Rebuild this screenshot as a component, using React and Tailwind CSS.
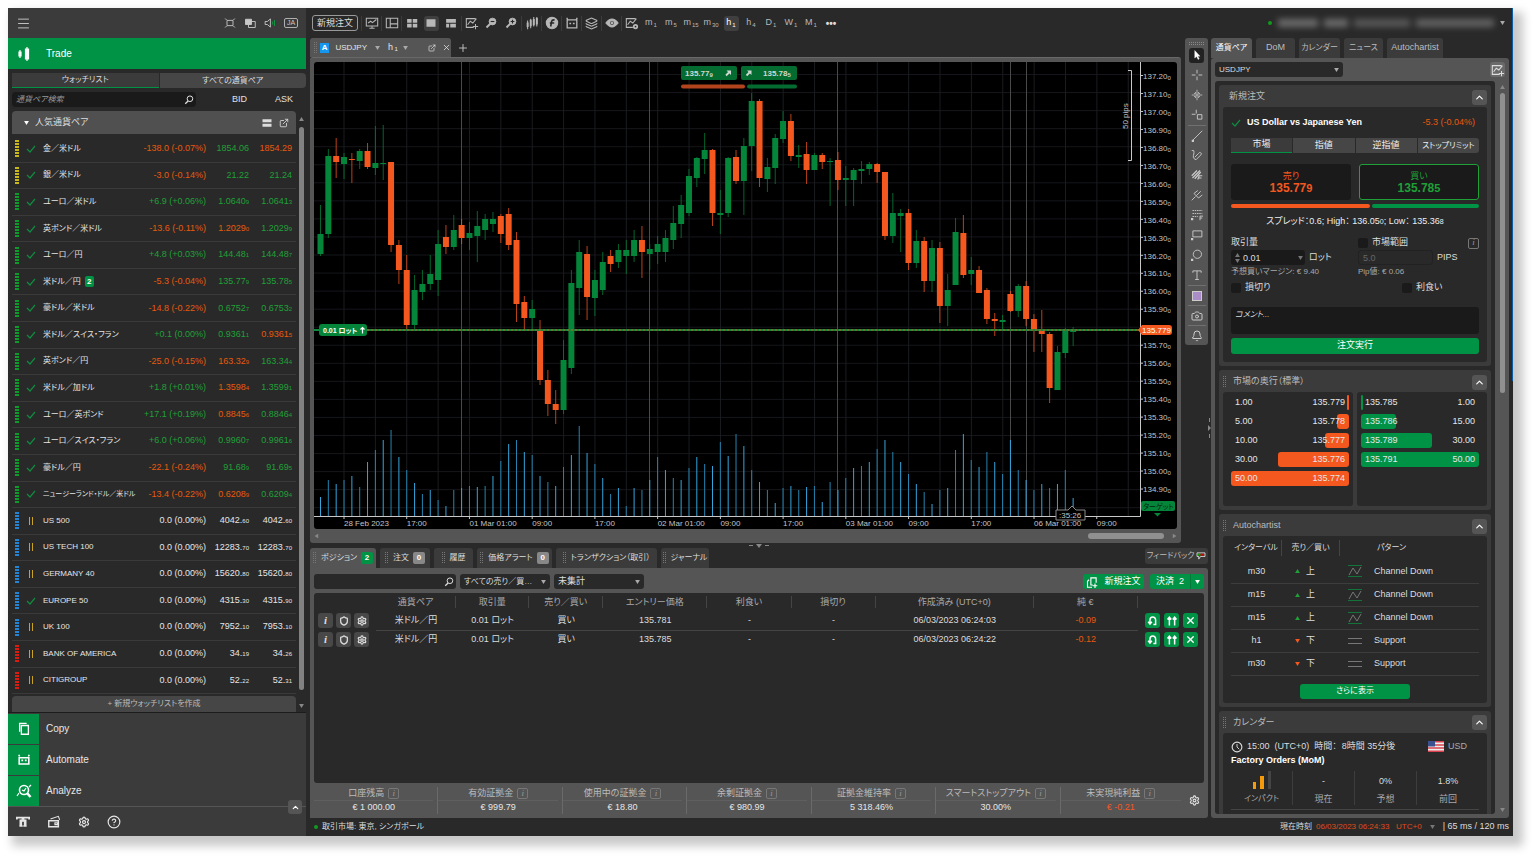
import React, { useState } from "react";
import { Menu, HelpCircle, Bell, Camera, ExternalLink, X, Plus, Settings, Shield, ChevronUp, Layers } from "lucide-react";

const watchlist = [
  ["金／米ドル", "-138.0 (-0.07%)", "d", "1854.06", "", "u", "1854.29", "", "d", "metal"],
  ["銀／米ドル", "-3.0 (-0.14%)", "d", "21.22", "", "u", "21.24", "", "u", "metal"],
  ["ユーロ／米ドル", "+6.9 (+0.06%)", "u", "1.0640", "9", "u", "1.0641", "3", "u", "forex"],
  ["英ポンド／米ドル", "-13.6 (-0.11%)", "d", "1.2029", "0", "d", "1.2029", "9", "u", "forex"],
  ["ユーロ／円", "+4.8 (+0.03%)", "u", "144.48", "1", "u", "144.48", "7", "u", "forex"],
  ["米ドル／円", "-5.3 (-0.04%)", "d", "135.77", "9", "u", "135.78", "5", "u", "forex"],
  ["豪ドル／米ドル", "-14.8 (-0.22%)", "d", "0.6752", "7", "u", "0.6753", "2", "u", "forex"],
  ["米ドル／スイス・フラン", "+0.1 (0.00%)", "u", "0.9361", "1", "u", "0.9361", "5", "d", "forex"],
  ["英ポンド／円", "-25.0 (-0.15%)", "d", "163.32", "9", "d", "163.34", "4", "u", "forex"],
  ["米ドル／加ドル", "+1.8 (+0.01%)", "u", "1.3598", "4", "d", "1.3599", "1", "u", "forex"],
  ["ユーロ／英ポンド", "+17.1 (+0.19%)", "u", "0.8845", "6", "d", "0.8846", "4", "u", "forex"],
  ["ユーロ／スイス・フラン", "+6.0 (+0.06%)", "u", "0.9960", "7", "u", "0.9961", "6", "u", "forex"],
  ["豪ドル／円", "-22.1 (-0.24%)", "d", "91.68", "9", "u", "91.69", "5", "u", "forex"],
  ["ニュージーランド・ドル／米ドル", "-13.4 (-0.22%)", "d", "0.6208", "9", "d", "0.6209", "4", "u", "forex"],
  ["US 500", "0.0 (0.00%)", "n", "4042.", "60", "n", "4042.", "60", "n", "index"],
  ["US TECH 100", "0.0 (0.00%)", "n", "12283.", "70", "n", "12283.", "70", "n", "index"],
  ["GERMANY 40", "0.0 (0.00%)", "n", "15620.", "80", "n", "15620.", "80", "n", "index"],
  ["EUROPE 50", "0.0 (0.00%)", "n", "4315.", "30", "n", "4315.", "90", "n", "index"],
  ["UK 100", "0.0 (0.00%)", "n", "7952.", "10", "n", "7953.", "10", "n", "index"],
  ["BANK OF AMERICA", "0.0 (0.00%)", "n", "34.", "19", "n", "34.", "26", "n", "stock"],
  ["CITIGROUP", "0.0 (0.00%)", "n", "52.", "22", "n", "52.", "31", "n", "stock"],
];

const tone = { u: "text-[#1fa038]", d: "text-[#e8590c]", n: "text-[#e6e6e6]" };
const dots = { metal: "#c9b81c", forex: "#0f9a2c", index: "#2384d4", stock: "#d81c10" };

// high, body top, body bottom, low, direction (1 up, 0 down)
const candles = [
  [205, 234, 254, 256, 1], [149, 156, 234, 238, 1], [138, 156, 162, 178, 0], [153, 157, 164, 179, 1],
  [153, 159, 160, 183, 0], [149, 151, 161, 169, 1], [143, 151, 167, 169, 0], [126, 163, 168, 175, 1],
  [125, 163, 164, 180, 1], [162, 162, 245, 252, 0], [240, 245, 270, 284, 0], [255, 270, 325, 330, 0],
  [275, 290, 325, 330, 1], [270, 284, 292, 300, 1], [255, 274, 284, 290, 1], [230, 244, 280, 296, 1],
  [225, 237, 247, 254, 0], [215, 230, 247, 250, 1], [219, 225, 238, 244, 0], [222, 233, 238, 250, 1],
  [211, 226, 236, 262, 1], [214, 219, 230, 240, 1], [212, 219, 224, 232, 1], [214, 216, 234, 243, 0],
  [208, 214, 245, 250, 0], [232, 240, 304, 322, 0], [296, 302, 318, 330, 0], [300, 309, 318, 330, 1],
  [320, 330, 380, 385, 0], [370, 380, 404, 416, 0], [390, 404, 410, 424, 0], [340, 360, 410, 414, 1],
  [270, 283, 368, 374, 1], [240, 252, 288, 315, 1], [246, 254, 297, 320, 0], [270, 280, 298, 316, 1],
  [252, 262, 290, 295, 1], [250, 256, 264, 272, 0], [244, 250, 262, 268, 1], [240, 250, 256, 274, 1],
  [230, 240, 256, 262, 1], [226, 240, 252, 278, 0], [244, 249, 254, 270, 1], [236, 244, 252, 264, 1],
  [230, 238, 252, 262, 1], [206, 223, 240, 249, 1], [195, 205, 224, 238, 1], [169, 176, 213, 216, 1],
  [157, 158, 178, 187, 1], [133, 150, 159, 174, 1], [149, 150, 213, 226, 0], [190, 213, 215, 234, 1],
  [157, 158, 213, 217, 1], [150, 157, 181, 184, 0], [138, 146, 181, 215, 1], [93, 101, 146, 171, 1],
  [99, 101, 178, 187, 0], [158, 167, 179, 192, 1], [134, 138, 168, 184, 1], [111, 121, 139, 143, 1],
  [114, 121, 156, 161, 0], [145, 155, 157, 168, 1], [142, 154, 170, 184, 0], [153, 155, 170, 170, 1],
  [153, 155, 162, 169, 0], [158, 161, 162, 206, 1], [152, 160, 180, 190, 0], [166, 178, 180, 206, 1],
  [168, 170, 180, 206, 1], [161, 169, 171, 184, 1], [162, 164, 169, 175, 1], [163, 164, 172, 183, 0],
  [172, 172, 236, 240, 0], [193, 213, 236, 243, 1], [209, 213, 216, 252, 1], [209, 213, 263, 270, 0],
  [230, 241, 263, 268, 1], [237, 241, 281, 292, 0], [240, 248, 281, 292, 1], [242, 248, 306, 323, 0],
  [274, 290, 306, 326, 1], [218, 232, 285, 285, 1], [215, 233, 275, 278, 0], [257, 270, 274, 285, 1],
  [266, 270, 293, 293, 0], [288, 290, 319, 324, 0], [313, 319, 321, 336, 0], [315, 320, 322, 329, 1],
  [291, 294, 311, 312, 0], [284, 286, 311, 317, 1], [281, 286, 319, 326, 0], [314, 319, 330, 352, 0],
  [310, 330, 334, 352, 0], [332, 334, 388, 403, 0], [346, 352, 390, 390, 1], [328, 330, 353, 358, 1],
  [327, 329, 332, 346, 1],
];

// tops of the tick volume bars
const volumes = [
  497, 480, 484, 480, 476, 487, 462, 450, 440, 430, 457, 470, 483, 494, 490, 500, 506, 490, 488, 486,
  487, 486, 476, 461, 444, 440, 452, 455, 476, 482, 486, 467, 455, 426, 453, 464, 478, 494, 488, 506,
  488, 490, 480, 457, 470, 478, 480, 468, 457, 464, 466, 442, 456, 434, 446, 470, 482, 490, 503, 488,
  486, 490, 487, 486, 502, 482, 490, 478, 468, 466, 462, 449, 440, 452, 462, 474, 484, 492, 504, 490,
  488, 450, 434, 460, 467, 452, 462, 474, 440, 470, 480, 490, 484, 488, 484, 470, 498,
];

const times = ["28 Feb 2023", "17:00", "01 Mar 01:00", "09:00", "17:00", "02 Mar 01:00", "09:00", "17:00", "03 Mar 01:00", "09:00", "17:00", "06 Mar 01:00", "09:00"];
const step = 7.84;
const candleX = (i) => 6.5 + step * i;

function PriceChart() {
  return (
    <svg viewBox="314 62 862 467" preserveAspectRatio="xMinYMin meet" className="block h-full w-full rounded-[3px] bg-black" fontSize="8" fill="#c4c4c4">
      {Array.from({ length: 25 }, (_, i) => (
        <path key={i} d={`M314 ${74.5 + i * 18.05}H1140`} stroke="#15161b" />
      ))}
      {Array.from({ length: 26 }, (_, i) => (
        <path key={i} d={`M${344 + i * 31.37} 62V516`} stroke="#1b1c20" />
      ))}
      {[461.5, 649.5, 837.5, 1010.5, 1026.5].map((x) => (
        <path key={x} d={`M${x} 62V516`} stroke="#4a4a4a" />
      ))}
      {volumes.map((y, i) => (
        <path key={i} d={`M${314 + candleX(i)} ${y}V516`} stroke={i % 2 ? "#2683b0" : "#35a5dc"} />
      ))}
      {candles.map(([hi, top, bottom, low, up], i) => {
        const x = 314 + candleX(i);
        return (
          <g key={i} fill={up ? "#058539" : "#f4581f"}>
            <rect x={x - 0.5} y={hi} width="1" height={low - hi} opacity="0.75" />
            <rect x={x - 3} y={top} width="6" height={Math.max(bottom - top, 1)} />
          </g>
        );
      })}
      <path d="M314 330H1140" stroke="#0c8b3c" strokeWidth="2" />
      <path d="M367 330H1140" stroke="#d9541f" strokeWidth="1" strokeDasharray="2 2" />

      {/* Axes */}
      <path d="M1140.5 62V516.5H314" stroke="#c8c8c8" fill="none" />
      {times.map((t, i) => (
        <g key={i}>
          <path d={`M${344 + i * 62.73} 516v3`} stroke="#c8c8c8" />
          <text x={344 + i * 62.73} y="526">{t}</text>
        </g>
      ))}
      {Array.from({ length: 24 }, (_, i) => {
        if (i === 14) return null;
        return (
          <g key={i}>
            <path d={`M1140 ${75.5 + i * 17.98}h3`} stroke="#c8c8c8" />
            <text x="1143" y={79 + i * 17.95}>
              {(137.2 - i * 0.1).toFixed(2)}
              <tspan fontSize="6" dy="1">0</tspan>
            </text>
          </g>
        );
      })}

      {/* Pips scale */}
      <path d="M1128 70.5h3.500v90H1128" stroke="#c8c8c8" fill="none" />
      <text transform="translate(1128 129) rotate(-90)">50 pips</text>

      {/* Quick trade buttons */}
      <rect x="681" y="66" width="56" height="14" rx="2" fill="#046c31" />
      <rect x="741" y="66" width="56" height="14" rx="2" fill="#046c31" />
      <g fontWeight="bold" fill="#cfd8d2">
        <text x="685" y="76">135.77<tspan fontSize="6" dy="1">9</tspan></text>
        <text x="763" y="76">135.78<tspan fontSize="6" dy="1">5</tspan></text>
      </g>
      <path d="M726 75.500l3-3M746.500 75.500l3-3" stroke="#cfd8d2" strokeWidth="1.800" />
      <path d="M726.500 70.500h4.500v4.500zM747 70.500h4.500v4.500z" fill="#cfd8d2" />
      <path d="M683 86.500H743" stroke="#b1441d" strokeWidth="4" strokeLinecap="round" />
      <path d="M749 86.500H795" stroke="#046c31" strokeWidth="4" strokeLinecap="round" />

      {/* Position label and last price */}
      <rect x="319" y="324" width="48" height="12" rx="3" fill="#058539" />
      <text x="323" y="333" fontSize="7" fontWeight="bold" fill="#fff">0.01 ロット</text>
      <path d="M362.500 333.500v-5M360.500 329.500l2-2 2 2" stroke="#fff" strokeWidth="1.200" fill="none" />
      <path d="M1138 330l4-5h27q3 0 3 3v4q0 3-3 3h-27z" fill="#f4581f" />
      <text x="1142" y="333" fill="#fff">135.779</text>

      <path d="M1056 510h12l4-4 4 4h9v10h-29z" fill="#000" stroke="#8a8a8a" />
      <text x="1059" y="518">:35:26</text>
      <rect x="1141" y="501" width="34" height="10" rx="2" fill="#058539" />
      <text x="1143" y="509" fontSize="7" fill="#04240f">ターゲット</text>
      <path d="M1154 513h7l-3.500 3.500z" fill="#058539" />
    </svg>
  );
}

function Svg({ children, className = "h-4 w-4", fill = "none" }) {
  return (
    <svg viewBox="0 0 16 16" className={className} fill={fill} stroke="currentColor" strokeWidth="1.2" aria-hidden="true">
      {children}
    </svg>
  );
}

const Check = () => (
  <svg viewBox="0 0 10 8" className="h-2 w-2.5 shrink-0" fill="none" stroke="#0f8a41" strokeWidth="1.2">
    <path d="M1 4l3 3 5-6" />
  </svg>
);

const Magnifier = ({ className = "h-3 w-3" }) => (
  <Svg className={className}>
    <circle cx="9.500" cy="6" r="4.500" strokeWidth="1.600" />
    <path d="M6.500 9.500L2 14" strokeWidth="2" />
  </Svg>
);

const Zoom = ({ plus }) => (
  <Svg className="h-3 w-3">
    <circle cx="10" cy="6" r="4.500" fill="currentColor" />
    <path d="M7 9l-5 5" strokeWidth="2.500" />
    <path d={plus ? "M7.500 6h5M10 3.500v5" : "M7.500 6h5"} stroke="#292929" strokeWidth="1.500" />
  </Svg>
);

const Caret = ({ className = "text-[#aaa]" }) => (
  <svg viewBox="0 0 6 5" className={`h-1 w-[5px] shrink-0 ${className}`} fill="currentColor"><path d="M0 0h6L3 5z" /></svg>
);

const Grip = () => (
  <svg viewBox="0 0 4 12" className="h-3 w-1 shrink-0" stroke="#777"><path d="M.5 0v12M2.500 0v12" strokeDasharray="1 1" /></svg>
);

const ChartAdd = () => (
  <Svg className="h-3.5 w-3.5">
    <path d="M10 13H1.500V3H12M3 10l3-4 3 2 4-5M12 9v6M9 12h6" />
  </Svg>
);

function Sidebar() {
  const nav = [
    ["Copy", <Svg key="c" className="h-3.5 w-3.5"><path d="M5 4h8v10H5zM3 11V1.500h8" strokeWidth="1.500" /></Svg>],
    ["Automate", <Svg key="a" className="h-3.5 w-3.5"><path d="M2.500 5.500h11v7h-11zM3 4L2 2M13 4l1-2" strokeWidth="1.800" /><path d="M5 8.500h2M9 8.500h2" strokeWidth="2" /></Svg>],
    ["Analyze", <Svg key="z" className="h-4 w-4"><circle cx="8" cy="7" r="4.500" strokeWidth="1.600" /><path d="M11 10l3.500 4" strokeWidth="2.500" /><path d="M1 13l2-3M6 7l2 1 2-3M13 4l2-2" /></Svg>],
  ];
  return (
    <aside className="flex w-[298px] shrink-0 flex-col bg-[#292929]">
      <div className="flex h-[30px] shrink-0 items-center justify-between bg-[#3b3b3b] px-2 text-[#c8c8c8]">
        <button aria-label="Menu"><Menu size={15} strokeWidth={1.5} /></button>
        <div className="flex items-center gap-2">
          <Svg className="h-3 w-3"><path d="M4 4.500h8v7H4zM1.500 2l2 2M14.500 2l-2 2M1.500 14l2-2M14.500 14l-2-2" /></Svg>
          <Svg className="h-3 w-3"><path d="M6 6h9v8H6z" /><path d="M2 3h8v7H2z" fill="currentColor" /></Svg>
          <Svg className="h-3 w-3"><path d="M1.500 6h3l4-3.500v11L4.500 10h-3z" /><path d="M11.500 6v4M14 4v8" stroke="#119a3e" /></Svg>
          <span className="flex h-2.5 w-[14px] items-center justify-center rounded-[2px] border border-[#b0b0b0] text-[7px]">JA</span>
        </div>
      </div>
      <button className="flex h-[31px] shrink-0 items-center gap-3.5 bg-[#009345] pl-2 text-[10px] text-white">
        <Svg className="h-4 w-4" fill="currentColor"><path d="M4 4v8M11 1v14" /><path d="M3 6h2v4H3zM9.500 3h3v10h-3z" /></Svg>
        <span>Trade</span>
      </button>

      <div className="mt-1 grid h-[15px] shrink-0 grid-cols-2 gap-px pl-1 text-[8px] text-[#ddd]">
        <button className="border-b border-[#009345] bg-[#3b3b3b] leading-3">ウォッチリスト</button>
        <button className="rounded-r bg-[#464646] leading-3">すべての通貨ペア</button>
      </div>

      <div className="mt-1 flex h-[15px] shrink-0 items-center pl-1 text-[9px] text-[#e0e0e0]">
        <label className="flex h-full w-[184px] items-center rounded bg-[#1a1a1a] pr-0.5">
          <input aria-label="通貨ペア検索" placeholder="通貨ペア検索" className="min-w-0 flex-1 bg-transparent px-1 text-[8px] italic outline-none placeholder:text-[#9a9a9a]" />
          <Magnifier className="h-2.5 w-2.5" />
        </label>
        <span className="w-[51px] text-right">BID</span>
        <span className="w-[46px] text-right">ASK</span>
      </div>

      <div className="mt-1 flex min-h-0 flex-1">
        <div className="flex min-w-0 flex-1 flex-col pl-1">
          <div className="flex h-[23px] shrink-0 items-center rounded-t bg-[#505050] px-3 pr-[7px] text-[9px] text-[#ddd]">
            <Caret className="text-white" />
            <span className="flex-1 pl-1.5">人気通貨ペア</span>
            <Svg className="mr-1.5 h-3 w-3" fill="currentColor"><path d="M2 3h12v4H2zM2 9h12v4H2z" stroke="none" /></Svg>
            <ExternalLink size={10} />
          </div>
          <ul className="mt-0.5 flex min-h-0 flex-1 flex-col">
            {watchlist.map(([name, change, ct, bid, bidS, bt, ask, askS, at, kind], i) => (
              <li key={name} className="flex min-h-0 flex-1 items-center border-b border-[#3a3a3a] pl-[3px] pr-1 text-[9px]">
                <svg viewBox="0 0 4 17" className="h-[17px] w-1 shrink-0" fill="none" stroke={dots[kind]} shapeRendering="crispEdges">
                  <path d="M2 0v17" strokeWidth="4" strokeDasharray="2 1" />
                </svg>
                <span className="flex w-6 justify-center">
                  {kind === "metal" || kind === "forex" || name === "EUROPE 50" ? (
                    <Check />
                  ) : (
                    <svg viewBox="0 0 6 8" className="h-2 w-1.5" stroke="#c9a227"><path d="M1.500 0v8M4.500 0v8" /></svg>
                  )}
                </span>
                <span className={`flex flex-1 items-center whitespace-nowrap text-[#e6e6e6] ${i === 13 ? "text-[7px]" : "text-[8px]"}`}>
                  {name}
                  {i === 5 && <b className="ml-1 flex h-[11px] w-[9px] items-center justify-center rounded-[2px] bg-[#009345] text-[8px] text-white">2</b>}
                </span>
                <span className={`whitespace-nowrap ${tone[ct]}`}>{change}</span>
                <span className={`w-[43px] text-right ${tone[bt]}`}>{bid}<small className="text-[6px]">{bidS}</small></span>
                <span className={`w-[43px] text-right ${tone[at]}`}>{ask}<small className="text-[6px]">{askS}</small></span>
              </li>
            ))}
          </ul>
          <button className="mt-0.5 h-4 w-full shrink-0 rounded-t bg-[#464646] text-[8px] leading-4 text-[#bbb]">+ 新規ウォッチリストを作成</button>
        </div>
        <div className="flex w-2.5 flex-col items-center pb-1 pt-1.5">
          <Caret className="rotate-180 text-[#888]" />
          <div className="mb-3.5 mt-1.5 w-[5px] flex-1 rounded bg-[#828282]" />
          <Caret className="text-[#888]" />
        </div>
      </div>

      <nav className="relative shrink-0 border-t border-[#1c1c1c] bg-[#3b3b3b]">
        {nav.map(([label, icon]) => (
          <a key={label} href="#" className="flex h-[31px] items-center text-[10px] text-[#e6e6e6]">
            <span className="flex h-[30px] w-[31px] items-center justify-center bg-[#009345] text-white">{icon}</span>
            <span className="pl-[7px]">{label}</span>
          </a>
        ))}
        <button aria-label="Collapse" className="absolute -bottom-2 right-1 flex h-3.5 w-3.5 items-center justify-center rounded-[3px] bg-[#555] text-white"><ChevronUp size={9} strokeWidth={3} /></button>
      </nav>
      <div className="flex h-[30px] shrink-0 items-center gap-[17px] border-t border-[#555] bg-[#3b3b3b] pl-2 text-[#e6e6e6]">
        <Svg className="h-3.5 w-3.5" fill="currentColor"><path d="M1 5V3h14v2" fill="none" strokeWidth="2" /><path d="M4 5h3v8H4zM9 5h3v8H9z" stroke="none" /><path d="M4 12.500h8M7 4h2v3H7z" /></Svg>
        <Svg className="h-3.5 w-3.5"><path d="M2 6.500h11v7H2z" strokeWidth="1.600" /><path d="M4 4.500l9-3 1.500 4M9 9h3v2H9z" /></Svg>
        <Settings size={12} strokeWidth={2.5} />
        <HelpCircle size={14} />
      </div>
    </aside>
  );
}

const toolIcons = [
  <Svg key="mo" className="h-3.5 w-3.5"><path d="M1.500 2.500h13v9h-13zM5 14h6M3.500 8l3-2 2 1.500L13 4M8 12v2" /></Svg>,
  <Svg key="l" className="h-3.5 w-3.5"><path d="M1.500 2.500h13v11h-13zM6 2.500v11M6 9h8" /></Svg>,
  <Svg key="g" fill="currentColor" className="h-3 w-3"><path d="M1.500 2.500h6v5h-6zM9 2.500h6v5H9zM1.500 9h6v5h-6zM9 9h6v5H9z" stroke="none" /></Svg>,
  <Svg key="s" fill="currentColor" className="h-3 w-3"><path d="M2 3h12v10H2z" stroke="none" /></Svg>,
  <Svg key="m" fill="currentColor" className="h-3 w-3"><path d="M1.500 2.500h13v5h-13zM1.500 9h4v5h-4zM7 9h7.500v5H7z" stroke="none" /></Svg>,
  <ChartAdd key="ca" />,
  <Zoom key="zo" />,
  <Zoom key="zi" plus />,
  <Svg key="cd" className="h-3.5 w-3.5"><path d="M3 5v10M6.500 3v11M10 1v11M13.500 1v11" /><path d="M2.500 8h1v4h-1zM6 5h1v6H6zM9.500 4h1v6h-1zM13 3h1v6h-1z" fill="currentColor" /></Svg>,
  <Svg key="f" className="h-3.5 w-3.5"><circle cx="8" cy="8" r="6.500" fill="currentColor" /><path d="M11 4.500q-3-.5-3.500 2L6.500 12M5.500 8h5" stroke="#292929" strokeWidth="1.800" /></Svg>,
  <Svg key="r" className="h-3.5 w-3.5"><path d="M2.500 4.500h11v9h-11zM3 4L2 2M13 4l1-2" strokeWidth="1.500" /><path d="M5 8.500h2M9 8.500h2" strokeWidth="1.800" /></Svg>,
  <Layers key="ly" size={13} />,
  <Svg key="e" className="h-3.5 w-3.5" fill="currentColor"><path d="M1 8q7-9 14 0-7 9-14 0z" /><circle cx="8" cy="8" r="2.800" fill="#292929" /><circle cx="8" cy="8" r="1" /></Svg>,
  <Svg key="cs" className="h-3.5 w-3.5"><path d="M9 13H1.500V3H12M3 10l3-4 3 2 4-5" /><circle cx="12" cy="12" r="2" strokeWidth="2" /></Svg>,
];

const frames = [["m", "1"], ["m", "5"], ["m", "15"], ["m", "30"], ["h", "1"], ["h", "4"], ["D", "1"], ["W", "1"], ["M", "1"]];

function Toolbar() {
  const [frame, setFrame] = useState(4);
  return (
    <header className="flex h-[30px] shrink-0 items-center pl-1.5 pr-2 text-[#b8b8b8]">
      <button className="mr-[3px] h-4 w-[46px] rounded-[3px] border border-[#999] text-[9px] leading-3 text-[#ddd]">新規注文</button>
      {toolIcons.map((icon, i) => (
        <div key={i} className={i > 7 || i < 3 || i === 5 ? "flex w-5 justify-center border-l border-[#3c3c3c]" : "flex w-5 justify-center"}>
          <button aria-label={`tool ${i + 1}`} className={i === 3 ? "flex h-[15px] w-[15px] items-center justify-center rounded-[3px] bg-[#3f3f3f]" : "flex h-[15px] items-center justify-center"}>{icon}</button>
        </div>
      ))}
      {frames.map(([unit, n], i) => (
        <div key={i} className="flex w-5 justify-center">
          <button
            onClick={() => setFrame(i)}
            className={`flex h-[15px] min-w-[15px] items-start justify-center rounded-[3px] text-[9px] leading-3 ${frame === i ? "bg-[#3f3f3f] text-white" : ""}`}
          >
            {unit}<span className="pl-px pt-[5px] text-[6px] leading-2">{n}</span>
          </button>
        </div>
      ))}
      <button aria-label="More" className="w-5 text-[10px] font-bold text-[#ddd]">•••</button>
      <div className="ml-auto flex items-center gap-1.5">
        <span className="h-1 w-1 rounded-full bg-[#119a1e]" />
        <div className="flex w-[216px] items-center gap-1.5 opacity-60 blur-[3px]" aria-hidden="true">
          <span className="h-2 w-10 bg-[#999]" />
          <span className="h-2 w-6 bg-[#999]" />
          <span className="h-2 w-14 bg-[#777]" />
          <span className="h-2 flex-1 bg-[#888]" />
        </div>
        <Caret />
      </div>
    </header>
  );
}

const palette = [
  <Svg key="0" className="h-3 w-3" fill="currentColor"><path d="M5 2v10l2.500-2 2 4 1.500-1-2-3.500h3z" strokeWidth="0.500" /></Svg>,
  <Svg key="1"><path d="M8 1v5M8 10v5M1 8h5M10 8h5" /></Svg>,
  <Svg key="2"><path d="M8 1v14M1 8h14M6 4v2H4M10 4v2h2M6 12v-2H4M10 12v-2h2" strokeWidth="1" /></Svg>,
  <Svg key="3"><path d="M7 1v5M1 7h5M8.500 7.500h6v6h-6z" /></Svg>,
  <Svg key="4"><path d="M2 14L15 1" /><path d="M1 13h3v3H1z" fill="currentColor" stroke="none" /></Svg>,
  <Svg key="5"><path d="M1 2q4-1 3 3t-1 6q2 4 4 3l6-6q2-2 0-3t-3 1l-5 5" /></Svg>,
  <Svg key="6"><path d="M1 9l7-7M2 12l10-10M5 13l8-9M9 14l2-5h4M10 12h4" strokeWidth="1.600" /></Svg>,
  <Svg key="7"><path d="M1 15l5-5M4 6l6 6M4 6l5-4M7 9l6-6M10 12l5-4" /></Svg>,
  <Svg key="8"><path d="M2 2h13M2 6h13M2 10h7" strokeDasharray="2 1" /><path d="M12 15V9.500h4M12 12h3" /><path d="M0 12h3v3H0z" fill="currentColor" stroke="none" /></Svg>,
  <Svg key="9"><path d="M2.500 2.500h12v8h-12z" /><path d="M0 12h3v3H0z" fill="currentColor" stroke="none" /></Svg>,
  <Svg key="10"><circle cx="8.500" cy="7" r="5.500" /><path d="M0 13h3v3H0z" fill="currentColor" stroke="none" /></Svg>,
  <Svg key="11"><path d="M2.500 5V2.500h11V5M8 2.500V14M5.500 14h5" /></Svg>,
  <span key="12" className="h-2.5 w-2.5 border border-[#ccc] bg-[#a98cc8]" />,
  <Camera key="13" />,
  <Bell key="14" />,
];

function ChartArea() {
  return (
    <section className="flex min-h-0 flex-1">
      <div className="flex min-w-0 flex-1 flex-col">
        <div className="flex h-[19px] shrink-0 items-end gap-1.5">
          <div className="flex h-full w-[141px] items-center rounded-t-[3px] bg-[#555] pl-1 text-[9px] text-[#e6e6e6]">
            <Grip />
            <b className="ml-0.5 flex h-2.5 w-2.5 items-center justify-center bg-[#1597f0] text-[8px] text-white">A</b>
            <span className="ml-1.5 w-[42px] text-[8px]">USDJPY</span>
            <Caret />
            <span className="ml-2 w-4">h<sub className="text-[6px]"> 1</sub></span>
            <Caret />
            <button aria-label="Detach" className="ml-5"><ExternalLink size={8} /></button>
            <button aria-label="Close" className="ml-1.5"><X size={9} /></button>
          </div>
          <button aria-label="New tab" className="h-full text-[#bbb]"><Plus size={12} /></button>
        </div>
        <div className="flex min-h-0 flex-1 flex-col rounded-[3px] border-t border-[#686868] bg-[#555] px-1 pt-1">
          <div className="min-h-0 flex-1"><PriceChart /></div>
          <div className="flex h-3.5 shrink-0 items-center justify-end gap-2 text-[#888]">
            <Caret className="mr-auto rotate-90 text-[#888]" />
            <div className="h-1.5 w-[76px] rounded-full bg-[#909090]" />
            <Caret className="-rotate-90 text-[#888]" />
          </div>
        </div>
      </div>
      <div className="ml-1 flex w-[23px] shrink-0 flex-col items-center self-start rounded-[3px] bg-[#555] pt-1 text-[#ccc]">
        <svg viewBox="0 0 16 3" className="h-[3px] w-4" stroke="#888"><path d="M0 .5h16M0 2.500h16" strokeDasharray="1 1" /></svg>
        {palette.map((icon, i) => (
          <div key={i} className={i === 4 || i > 11 ? "flex h-5 w-[18px] items-center justify-center border-t border-[#707070]" : "flex h-5 w-[18px] items-center justify-center"}>
            <button aria-label={`drawing ${i + 1}`} className={i === 0 ? "flex h-[15px] w-[15px] items-center justify-center rounded-[3px] bg-[#222] text-white" : "flex h-[15px] w-[15px] items-center justify-center [&>svg]:h-3 [&>svg]:w-3"}>{icon}</button>
          </div>
        ))}
      </div>
    </section>
  );
}

const tabs = [["ポジション", 2, "w-[66px]"], ["注文", 0, "w-[50px]"], ["履歴", null, "w-[39px]"], ["価格アラート", 0, "w-[75px]"], ["トランザクション（取引）", null, "w-[101px]"], ["ジャーナル", null, "w-12"]];
const heads = ["", "通貨ペア", "取引量", "売り／買い", "エントリー価格", "利食い", "損切り", "作成済み (UTC+0)", "純 €", ""];
const colWidths = ["w-[62px]", "w-[80px]", "w-[73px]", "w-[74px]", "w-[104px]", "w-[84px]", "w-[84px]", "w-[158px]", "w-[104px]", "w-[66px]"];
const positions = [["135.781", "06/03/2023 06:24:03", "-0.09"], ["135.785", "06/03/2023 06:24:22", "-0.12"]];
const metrics = [["口座残高", "€ 1 000.00"], ["有効証拠金", "€ 999.79"], ["使用中の証拠金", "€ 18.80"], ["余剰証拠金", "€ 980.99"], ["証拠金維持率", "5 318.46%"], ["スマートストップアウト", "30.00%"], ["未実現純利益", "€ -0.21"]];

const InfoBox = () => <i className="flex h-[11px] w-[11px] shrink-0 items-center justify-center rounded-[2px] border border-[#777] font-['Liberation_Serif',serif] text-[9px] text-[#999]">i</i>;

function Positions() {
  const grey = "flex h-[15px] w-[15px] items-center justify-center rounded-[3px] bg-[#484848] text-[#ddd]";
  const green = "flex h-[15px] w-[15px] items-center justify-center rounded-[3px] bg-[#009345] text-white";
  return (
    <section className="flex h-[270px] shrink-0 flex-col text-[9px]">
      <div className="flex h-5 shrink-0 items-start gap-1">
        {tabs.map(([label, n, width], i) => (
          <button key={label} className={`flex h-full items-center justify-center gap-1 whitespace-nowrap rounded-t-[3px] text-[8px] text-[#ddd] ${width} ${i === 0 ? "bg-[#555]" : "bg-[#3b3b3b]"}`}>
            <Grip />
            {label}
            {n !== null && <b className={`flex h-3 w-3 shrink-0 items-center justify-center rounded-[2px] text-white ${i === 0 ? "bg-[#009345]" : "bg-[#888]"}`}>{n}</b>}
          </button>
        ))}
        <button className="ml-auto flex h-4 w-[63px] items-center justify-center gap-0.5 whitespace-nowrap rounded-[3px] bg-[#3b3b3b] text-[8px] text-[#bbb]">
          フィードバック
          <svg viewBox="0 0 11 9" className="h-2 w-2.5 shrink-0"><path d="M1 1h9v4H5L3 8V5H1z" fill="#3b3b3b" stroke="#ddd" /><path d="M2 2h3v2H2z" fill="#0a0" /><path d="M5 2h4v2H5z" fill="#d00" /></svg>
        </button>
      </div>
      <div className="flex min-h-0 flex-1 flex-col rounded-r-[3px] bg-[#555] px-1 pt-1.5">
        <div className="flex h-[15px] shrink-0 items-center gap-1 text-[#ddd]">
          <label className="flex h-full w-[142px] items-center rounded-[3px] bg-[#292929] pr-0.5">
            <input aria-label="検索" className="min-w-0 flex-1 bg-transparent outline-none" />
            <Magnifier className="h-2.5 w-2.5" />
          </label>
          <label className="relative flex h-full items-center">
            <select aria-label="方向" className="h-full w-[90px] appearance-none rounded-[3px] bg-[#292929] pl-1 text-[8px]"><option>すべての売り／買…</option></select>
            <span className="absolute right-1"><Caret /></span>
          </label>
          <label className="relative flex h-full items-center">
            <select aria-label="集計" className="h-full w-[90px] appearance-none rounded-[3px] bg-[#292929] pl-1 text-[9px]"><option>未集計</option></select>
            <span className="absolute right-1"><Caret /></span>
          </label>
          <button className="ml-auto mr-0.5 flex h-[15px] w-[61px] items-center justify-center gap-1.5 rounded-[3px] bg-[#009345] text-white">
            <Svg className="h-3 w-3"><path d="M9 12H6.500V2.500h7V9M4 5L2 7v8h6M12 10v6M9 13h6" strokeWidth="1.500" /></Svg>
            新規注文
          </button>
          <button className="flex h-[15px] w-[54px] items-center rounded-[3px] bg-[#009345] pl-1.5 text-white">
            <span className="flex-1 text-left">決済 &nbsp;2</span>
            <span className="flex h-full w-3.5 items-center justify-center border-l border-[#047a3a]"><Caret className="text-white" /></span>
          </button>
        </div>
        <div className="mt-1 min-h-0 flex-1 rounded-[3px] bg-[#292929]">
          <table className="w-full table-fixed border-collapse text-center text-[#ddd]">
            <colgroup>{colWidths.map((w, i) => <col key={i} className={w} />)}</colgroup>
            <thead>
              <tr className="h-[18px] text-[#aaa]">
                {heads.map((h, i) => (
                  <th key={i} className="whitespace-nowrap p-0 font-normal"><span className={i > 0 && i < 9 ? "block border-r border-[#444] leading-3" : "block"}>{h}</span></th>
                ))}
              </tr>
            </thead>
            <tbody>
              {positions.map(([price, time, net], row) => {
                const cell = row === 0 ? "whitespace-nowrap border-b border-[#444] p-0" : "whitespace-nowrap p-0";
                return (
                  <tr key={time} className="h-[19px]">
                    <td className="p-0">
                      <div className="flex gap-[3px] pl-1">
                        <button aria-label="情報" className={grey}><i className="font-['Liberation_Serif',serif] text-[11px] font-bold">i</i></button>
                        <button aria-label="保護" className={grey}><Shield size={10} strokeWidth={3} /></button>
                        <button aria-label="設定" className={grey}><Settings size={10} strokeWidth={3} /></button>
                      </div>
                    </td>
                    <td className={cell}>米ドル／円</td>
                    <td className={cell}>0.01 ロット</td>
                    <td className={cell}>買い</td>
                    <td className={cell}>{price}</td>
                    <td className={cell}>-</td>
                    <td className={cell}>-</td>
                    <td className={cell}>{time}</td>
                    <td className={`${cell} text-[#e8590c]`}>{net}</td>
                    <td className="p-0">
                      <div className="flex justify-end gap-1 pr-1.5">
                        <button aria-label="反転" className={green}><Svg className="h-3 w-3"><path d="M4 11V6.500a3.500 3.500 0 0 1 7.500 0V12.500H8.500M1.500 9L4 12l2.500-3" strokeWidth="2" /></Svg></button>
                        <button aria-label="倍増" className={green}><Svg className="h-3 w-3"><path d="M4.500 14V3M2 6l2.500-3L7 6M11.500 14V3M9 6l2.500-3L14 6" strokeWidth="2" /></Svg></button>
                        <button aria-label="決済" className={green}><X size={11} strokeWidth={3} /></button>
                      </div>
                    </td>
                  </tr>
                );
              })}
            </tbody>
          </table>
        </div>
        <div className="flex h-[35px] shrink-0 items-center">
          <dl className="grid flex-1 grid-cols-7 text-center">
            {metrics.map(([label, value], i) => (
              <div key={label} className={i < 6 ? "border-r border-[#6a6a6a] pr-1" : "pr-1"}>
                <dt className="flex h-3.5 items-center justify-center gap-1 whitespace-nowrap border-b border-[#5f5f5f] text-[#bbb]">{label}<InfoBox /></dt>
                <dd className={i === 6 ? "text-[#f4581f]" : "text-[#e6e6e6]"}>{value}</dd>
              </div>
            ))}
          </dl>
          <button aria-label="設定" className="px-1 text-[#ddd]"><Settings size={11} strokeWidth={2.5} /></button>
        </div>
      </div>
    </section>
  );
}

function Card({ title, grip = true, children }) {
  return (
    <section className="shrink-0 rounded-[3px] bg-[#3b3b3b] px-1 pb-1">
      <h2 className="flex h-[22px] items-center gap-1.5 pt-0.5 text-[9px] text-[#bbb]">
        {grip && <Grip />}
        <span className={grip ? "flex-1" : "flex-1 pl-1.5"}>{title}</span>
        <button aria-label="折りたたむ" className="flex h-[15px] w-[15px] items-center justify-center rounded-[3px] bg-[#555] text-white"><ChevronUp size={11} strokeWidth={2.5} /></button>
      </h2>
      {children}
    </section>
  );
}

const sells = [["1.00", "135.779", 2], ["5.00", "135.778", 10], ["10.00", "135.777", 20], ["30.00", "135.776", 60], ["50.00", "135.774", 100]];
const buys = [["135.785", "1.00", 2], ["135.786", "15.00", 30], ["135.789", "30.00", 60], ["135.791", "50.00", 100]];
const patterns = [["m30", 1, "Channel Down"], ["m15", 1, "Channel Down"], ["m15", 1, "Channel Down"], ["h1", 0, "Support"], ["m30", 0, "Support"]];

function Depth({ rows, side }) {
  return (
    <ul className="flex flex-1 flex-col gap-1 rounded-[3px] bg-[#292929] px-1 pt-[3px] text-[#e6e6e6]">
      {rows.map(([left, right, size]) => (
        <li key={left} className={`relative flex h-[15px] items-center justify-between px-1 ${side === "sell" ? "ml-1" : "mr-1"}`}>
          <span className={`absolute inset-y-0 rounded-[3px] ${side === "sell" ? "right-0 bg-[#f4581f]" : "left-0 bg-[#009345]"}`} style={{ width: `${size}%` }} />
          <span className="relative">{left}</span>
          <span className="relative">{right}</span>
        </li>
      ))}
    </ul>
  );
}

function RightPanel() {
  const box = "h-2.5 w-2.5 appearance-none rounded-[2px] bg-[#1a1a1a]";
  return (
    <aside className="mr-1 flex w-[298px] shrink-0 flex-col text-[9px] text-[#ddd]">
      <div className="flex h-5 shrink-0 gap-1 text-[#bbb]">
        <button className="w-[41px] whitespace-nowrap rounded-t-[3px] bg-[#555] text-[8px] text-white">通貨ペア</button>
        <button className="w-[39px] rounded-t-[3px] bg-[#3b3b3b]">DoM</button>
        <button className="w-[41px] whitespace-nowrap rounded-t-[3px] bg-[#3b3b3b] text-[8px]">カレンダー</button>
        <button className="w-[39px] rounded-t-[3px] bg-[#3b3b3b] text-[8px]">ニュース</button>
        <button className="w-14 rounded-t-[3px] bg-[#3b3b3b]">Autochartist</button>
      </div>
      <div className="flex min-h-0 flex-1 flex-col rounded-[3px] bg-[#555] pb-1 pl-1 pr-1 pt-1">
        <div className="flex h-[15px] shrink-0 items-center justify-between">
          <label className="relative flex h-full items-center">
            <select aria-label="通貨ペア" className="h-full w-[128px] appearance-none rounded-[3px] bg-[#292929] pl-1 text-[8px]"><option>USDJPY</option></select>
            <span className="absolute right-1"><Caret /></span>
          </label>
          <button aria-label="チャート追加" className="flex h-[15px] w-[15px] items-center justify-center rounded-[3px] bg-[#6a6a6a]"><ChartAdd /></button>
        </div>
        <div className="mt-1 flex min-h-0 flex-1">
          <div className="flex min-w-0 flex-1 flex-col gap-1 overflow-hidden rounded-[3px] bg-[#292929] px-1 pt-1">
            <Card title="新規注文" grip={false}>
              <form className="rounded-[3px] bg-[#292929] px-2 pb-2" onSubmit={(e) => e.preventDefault()}>
                <div className="flex h-[31px] items-center gap-1.5">
                  <Check />
                  <b className="flex-1 text-white">US Dollar vs Japanese Yen</b>
                  <span className="pr-1 text-[#e8590c]">-5.3 (-0.04%)</span>
                </div>
                <div className="grid h-[15px] grid-cols-4 gap-px text-[#eee]">
                  <button className="whitespace-nowrap border-b border-[#009345] bg-[#3b3b3b]">市場</button>
                  <button className="bg-[#464646]">指値</button>
                  <button className="bg-[#464646]">逆指値</button>
                  <button className="whitespace-nowrap rounded-r-[3px] bg-[#464646] text-[8px]">ストップリミット</button>
                </div>
                <div className="mt-[11px] grid h-9 grid-cols-2 gap-2">
                  <button className="rounded-[3px] bg-[#1a1a1a] leading-3 text-[#f4581f]">売り<b className="block text-[12px]">135.77<span className="text-[11px]">9</span></b></button>
                  <button className="rounded-[3px] border border-[#1fa038] bg-[#1a1a1a] leading-3 text-[#1fa038]">買い<b className="block text-[12px]">135.78<span className="text-[11px]">5</span></b></button>
                </div>
                <div className="mt-1 flex h-1 gap-0.5">
                  <span className="w-[56%] rounded bg-[#f4581f]" />
                  <span className="flex-1 rounded bg-[#009345]" />
                </div>
                <p className="flex h-7 items-center justify-center whitespace-pre text-[#eee]">スプレッド：0.6; High： 136.05<small className="text-[7px]">0</small>; Low： 135.36<small className="text-[7px]">8</small></p>
                <div className="flex h-3.5 items-center">
                  <label htmlFor="qty" className="w-[127px]">取引量</label>
                  <label className="flex flex-1 items-center gap-1"><input type="checkbox" className={box} />市場範囲</label>
                  <InfoBox />
                </div>
                <div className="flex h-[15px] items-center">
                  <div className="relative flex h-full w-[74px] items-center">
                    <input id="qty" defaultValue="0.01" className="h-full w-full rounded-[3px] bg-[#1a1a1a] pl-3 outline-none" />
                    <span className="absolute left-1 flex flex-col gap-0.5"><Caret className="rotate-180 text-[#777]" /><Caret className="text-[#777]" /></span>
                    <span className="absolute right-0.5"><Caret className="text-[#777]" /></span>
                  </div>
                  <span className="w-[53px] pl-1">ロット</span>
                  <input aria-label="市場範囲" defaultValue="5.0" className="h-full w-[75px] rounded-[3px] border border-[#222] bg-[#292929] pl-1 text-[#666] outline-none" />
                  <span className="pl-1">PIPS</span>
                </div>
                <div className="flex h-[13px] items-center text-[8px] text-[#aaa]">
                  <span className="w-[127px]">予想買いマージン: € 9.40</span>
                  <span>Pip値: € 0.06</span>
                </div>
                <div className="mt-0.5 flex h-4 items-center">
                  <label className="flex w-[171px] items-center gap-1"><input type="checkbox" className={box} />損切り</label>
                  <label className="flex items-center gap-1"><input type="checkbox" className={box} />利食い</label>
                </div>
                <textarea aria-label="コメント" placeholder="コメント..." className="mt-[11px] block h-[27px] w-full resize-none rounded-[3px] bg-[#1a1a1a] px-1 py-0.5 text-[8px] italic outline-none placeholder:text-[#ddd]" />
                <button className="mt-1 block h-4 w-full rounded-[3px] bg-[#009345] text-white">注文実行</button>
              </form>
            </Card>

            <Card title="市場の奥行（標準）">
              <div className="flex h-[114px] gap-1">
                <Depth rows={sells} side="sell" />
                <Depth rows={buys} side="buy" />
              </div>
            </Card>

            <Card title="Autochartist">
              <div className="rounded-[3px] bg-[#292929] px-2 pb-1">
                <table className="w-full table-fixed text-center">
                  <colgroup>
                    <col className="w-[51px]" />
                    <col className="w-[58px]" />
                    <col className="w-[22px]" />
                    <col />
                  </colgroup>
                  <thead>
                    <tr className="h-6">
                      <th className="p-0 font-normal"><span className="block whitespace-nowrap border-r border-[#444] text-[8px] leading-4">インターバル</span></th>
                      <th className="p-0 font-normal"><span className="block whitespace-nowrap border-r border-[#444] text-[8px] leading-4">売り／買い</span></th>
                      <th colSpan={2} className="p-0 pr-9 text-[8px] font-normal">パターン</th>
                    </tr>
                  </thead>
                  <tbody>
                    {patterns.map(([tf, up, name], i) => (
                      <tr key={i} className="h-[23px] border-b border-[#3d3d3d]">
                        <td className="p-0">{tf}</td>
                        <td className="p-0"><span className="flex items-center justify-center gap-1.5 pr-3"><Caret className={up ? "rotate-180 text-[#1fa038]" : "text-[#f4581f]"} />{up ? "上" : "下"}</span></td>
                        <td className="p-0">
                          <svg viewBox="0 0 14 12" className="ml-auto h-3 w-3.5" fill="none" stroke="#777">
                            {up ? <><path d="M0 .5h14M0 11.500h14" stroke="#12743a" /><path d="M1 10l4-7 4 6 4-7" /></> : <path d="M0 3.500h14M0 8.500h14" />}
                          </svg>
                        </td>
                        <td className="whitespace-nowrap p-0 pl-3 text-left">{name}</td>
                      </tr>
                    ))}
                  </tbody>
                </table>
                <button className="mx-auto mt-2 block h-[15px] w-[110px] rounded-[3px] bg-[#009345] text-[8px] text-white">さらに表示</button>
              </div>
            </Card>

            <Card title="カレンダー">
              <div className="rounded-[3px] bg-[#292929] px-2 pt-2">
                <div className="flex h-3 items-center gap-1 whitespace-pre">
                  <Svg className="h-3 w-3"><circle cx="8" cy="8" r="6.500" strokeWidth="1.500" /><path d="M8 4v4l3 3" /></Svg>
                  <span className="flex-1">15:00  (UTC+0)  時間：  8時間 35分後</span>
                  <svg viewBox="0 0 16 11" className="h-[11px] w-4 shrink-0"><path fill="#eee" d="M0 0h16v11H0z" /><path d="M0 .8h16M0 4h16M0 7h16M0 10.200h16" stroke="#d8414d" strokeWidth="1.500" /><path fill="#3c4f8f" d="M0 0h7v5.500H0z" /></svg>
                  <span className="pr-3 text-[#aaa]">USD</span>
                </div>
                <b className="block leading-3.5 text-white">Factory Orders (MoM)</b>
                <div className="mt-1 grid h-[34px] grid-cols-4 text-center">
                  <div className="flex flex-col items-center justify-between border-r border-[#3d3d3d]">
                    <svg viewBox="0 0 18 18" className="h-[18px] w-[18px]"><path fill="#f59a0a" d="M0 11h3v7H0zM7 5h4v13H7z" /><path fill="#444" d="M15 0h3v18h-3z" /></svg>
                    <span className="whitespace-nowrap text-[8px] leading-3 text-[#aaa]">インパクト</span>
                  </div>
                  {[["-", "現在"], ["0%", "予想"], ["1.8%", "前回"]].map(([v, l], i) => (
                    <div key={l} className={`flex flex-col justify-between pt-1 ${i < 2 ? "border-r border-[#3d3d3d]" : ""}`}>
                      <span className="leading-3">{v}</span>
                      <span className="leading-3 text-[#aaa]">{l}</span>
                    </div>
                  ))}
                </div>
                <div className="mt-1 h-8 border-t border-[#444]" />
              </div>
            </Card>
          </div>
          <div className="flex w-2.5 flex-col items-end pb-0.5 pt-1">
            <Caret className="rotate-180 text-[#888]" />
            <div className="mt-1 h-[300px] w-[5px] rounded bg-[#909090]" />
            <Caret className="mt-auto text-[#888]" />
          </div>
        </div>
      </div>
    </aside>
  );
}

const App = () => {
  return (
    <div className="h-screen min-h-[700px] min-w-[1200px] bg-white pb-6 pl-2 pr-[23px] pt-2 font-['Liberation_Sans','Noto_Sans_CJK_JP',sans-serif] [font-feature-settings:'palt']">
      <div className="relative flex h-full bg-[#292929] shadow-[7px_7px_9px_3px_#c9c9c9]">
        <Sidebar />
        <div className="flex min-w-0 flex-1 flex-col">
          <Toolbar />
          <div className="flex min-h-0 flex-1">
            <main className="ml-1 flex min-w-0 flex-1 flex-col">
              <ChartArea />
              <div className="flex h-[5px] shrink-0 items-center justify-center">
                <svg viewBox="0 0 20 4" className="h-1 w-5" fill="#888"><path d="M0 1h4v1H0zM7 0h6l-3 4zM16 1h4v1h-4z" /></svg>
              </div>
              <Positions />
            </main>
            <div className="flex w-[3px] items-center">
              <svg viewBox="0 0 3 20" className="h-5 w-[3px]" fill="#888"><path d="M1 0h1v4H1zM0 7l3 3-3 3zM1 16h1v4H1z" /></svg>
            </div>
            <RightPanel />
          </div>
          <footer className="flex h-[18px] shrink-0 items-center gap-1 pl-2 pr-1 text-[9px] text-[#ddd]">
            <span className="h-1 w-1 rounded-full bg-[#119a1e]" />
            <span className="flex-1 text-[8px]">取引市場: 東京, シンガポール</span>
            <span className="text-[8px]">現在時刻</span>
            <span className="text-[8px] text-[#e04a1c]">06/03/2023 06:24:33 &nbsp; UTC+0</span>
            <span className="px-1"><Caret className="text-[#777]" /></span>
            <span>| 65 ms / 120 ms</span>
          </footer>
        </div>
        <span className="absolute right-0 top-0 h-[45%] w-px bg-[#0a5ca8]" />
      </div>
    </div>
  );
};

export default App;
